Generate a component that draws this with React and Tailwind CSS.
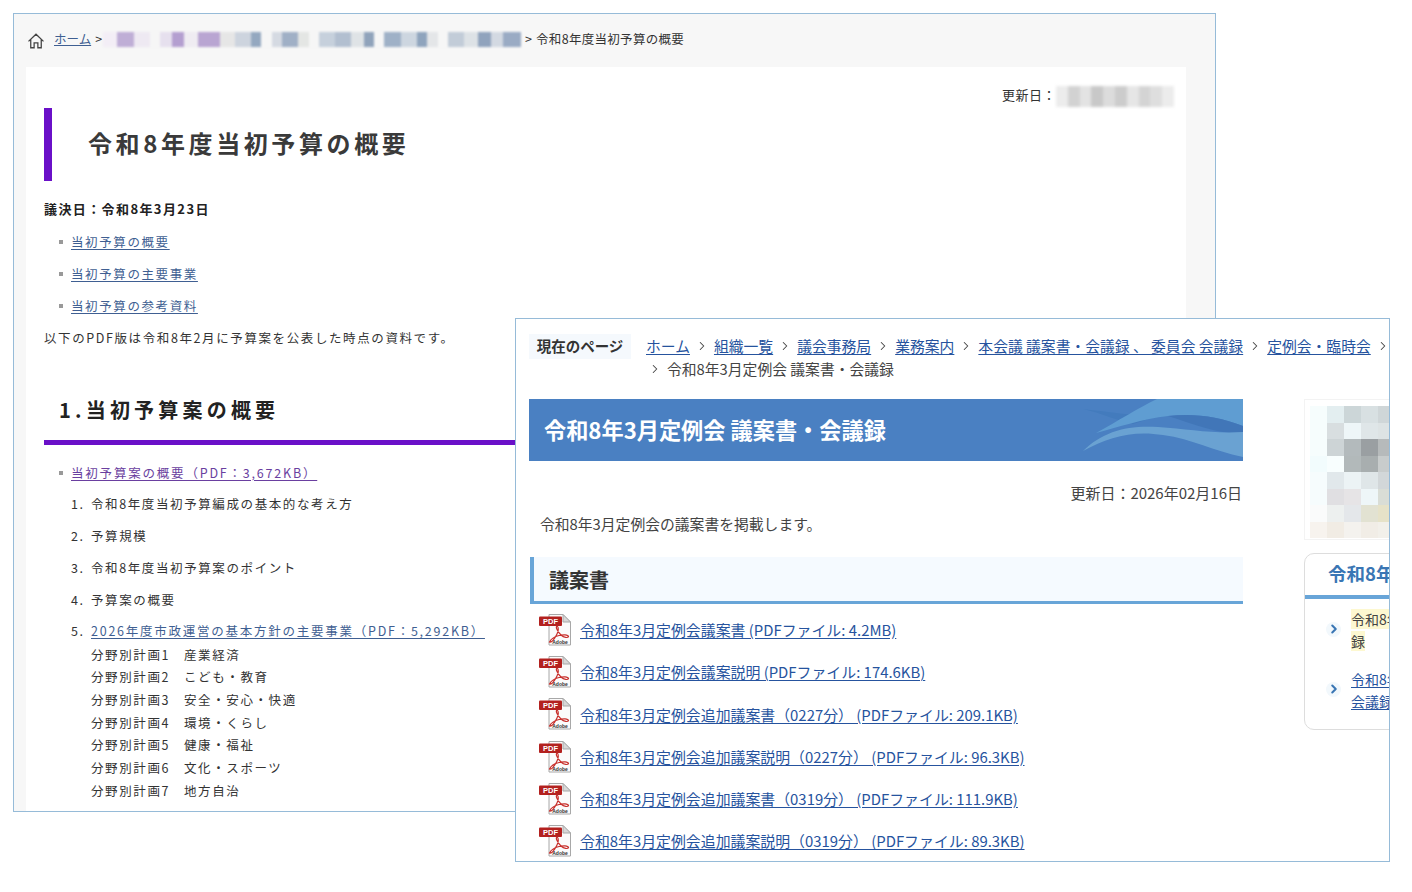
import { ChevronRight } from 'lucide-react';

const font = 'font-["Noto_Sans_CJK_JP","Noto_Sans",sans-serif]';

const crumbBlur = [
  'w-[10px] bg-[#f3eef6]', 'w-[12px] bg-[#bfaed6]', 'w-[12px] bg-[#eee9f2]', 'w-[6px] bg-[#f6f6f6]',
  'w-[7px] bg-[#e6e0ee]', 'w-[8px] bg-[#b49fd0]', 'w-[10px] bg-[#efecf2]', 'w-[18px] bg-[#b9a5d2]',
  'w-[10px] bg-[#e6e6e6]', 'w-[12px] bg-[#cdd4de]', 'w-[6px] bg-[#94a8c0]', 'w-[6px] bg-[#f6f6f6]',
  'w-[6px] bg-[#d5dae2]', 'w-[12px] bg-[#a0b0c6]', 'w-[6px] bg-[#e4e6e4]', 'w-[6px] bg-[#f6f6f6]',
  'w-[12px] bg-[#c6d0dc]', 'w-[12px] bg-[#b2bfd0]', 'w-[8px] bg-[#dfe3e6]', 'w-[6px] bg-[#90a3bb]',
  'w-[6px] bg-[#f6f6f6]', 'w-[12px] bg-[#9fb1c7]', 'w-[12px] bg-[#cdd6e0]', 'w-[6px] bg-[#8fa4bd]',
  'w-[6px] bg-[#e4e6e8]', 'w-[6px] bg-[#f6f6f6]', 'w-[12px] bg-[#c2ccd8]', 'w-[10px] bg-[#dde2e6]',
  'w-[8px] bg-[#90a3bd]', 'w-[8px] bg-[#d3d9e2]', 'w-[14px] bg-[#9aabc4]',
];

const dateBlur = [
  'bg-[#ececec]', 'bg-[#d2d2d2]', 'bg-[#e3e3e3]', 'bg-[#c8c8c8]', 'bg-[#dcdcdc]', 'bg-[#cccccc]',
  'bg-[#e6e6e6]', 'bg-[#d4d4d4]', 'bg-[#dedede]', 'bg-[#ececec]',
];

const photo = [
  'bg-[#f6fdfd]', 'bg-[#e3eef0]', 'bg-[#ccd6d8]', 'bg-[#d8e0e2]', 'bg-[#cfd6d8]',
  'bg-[#f6fdfd]', 'bg-[#d8dee0]', 'bg-[#eef6f8]', 'bg-[#dfe6e8]', 'bg-[#dde3e4]',
  'bg-[#f6fdfd]', 'bg-[#cdd4d6]', 'bg-[#b3babc]', 'bg-[#9a9fa2]', 'bg-[#b6babb]',
  'bg-[#f2fcfd]', 'bg-[#f8fefe]', 'bg-[#b2b9ba]', 'bg-[#a8aeaf]', 'bg-[#c8cccc]',
  'bg-[#f6fcfd]', 'bg-[#e1e8eb]', 'bg-[#ecf3f5]', 'bg-[#dfe6e8]', 'bg-[#d2d7d9]',
  'bg-[#f6fcfd]', 'bg-[#e0dfe2]', 'bg-[#e6e4e6]', 'bg-[#eef6f8]', 'bg-[#d9ddd6]',
  'bg-[#fafbfb]', 'bg-[#edf0ef]', 'bg-[#e4e7ea]', 'bg-[#e2e2d2]', 'bg-[#e6e2c8]',
  'bg-[#f7f3ee]', 'bg-[#f1ece4]', 'bg-[#f4f2ee]', 'bg-[#f1ede6]', 'bg-[#f2f0ea]',
];

const plans = [
  ['分野別計画1', '産業経済'],
  ['分野別計画2', 'こども・教育'],
  ['分野別計画3', '安全・安心・快適'],
  ['分野別計画4', '環境・くらし'],
  ['分野別計画5', '健康・福祉'],
  ['分野別計画6', '文化・スポーツ'],
  ['分野別計画7', '地方自治'],
];

const pdfs = [
  '令和8年3月定例会議案書 (PDFファイル: 4.2MB)',
  '令和8年3月定例会議案説明 (PDFファイル: 174.6KB)',
  '令和8年3月定例会追加議案書（0227分） (PDFファイル: 209.1KB)',
  '令和8年3月定例会追加議案説明（0227分） (PDFファイル: 96.3KB)',
  '令和8年3月定例会追加議案書（0319分） (PDFファイル: 111.9KB)',
  '令和8年3月定例会追加議案説明（0319分） (PDFファイル: 89.3KB)',
];

const crumbs = ['ホーム', '組織一覧', '議会事務局', '業務案内', '本会議 議案書・会議録 、 委員会 会議録', '定例会・臨時会'];

function PdfIcon() {
  return (
    <svg width="34" height="33" viewBox="0 0 34 33" className="shrink-0">
      <path d="M11 0.500H25L32.500 8V31H11Z" fill="#fbfbfb" stroke="#a8a8a8" strokeWidth="1" />
      <path d="M25 0.500V8H32.500Z" fill="#d8d8d8" stroke="#a8a8a8" strokeWidth="1" />
      <rect x="1" y="2.500" width="23" height="9.500" rx="1" fill="#b3211f" />
      <text x="12.500" y="10.300" textAnchor="middle" fontSize="7.500" fontWeight="700" fill="#fff" fontFamily="Liberation Sans, sans-serif">PDF</text>
      <path d="M19 12C17 13 20 18 23 21C26 24 30 24 30.500 22.500C30 20.500 25 20.500 21 21.500C17 22.500 13 25 11.500 28C14 29 17 24 19 20C20.500 17 21 13 19 12Z" fill="none" stroke="#c8302c" strokeWidth="1.200" />
      <text x="22" y="30" textAnchor="middle" fontSize="5" fontWeight="700" fill="#333" fontFamily="Liberation Sans, sans-serif">Adobe</text>
    </svg>
  );
}

function OldWindow() {
  return (
    <div className="absolute left-[13px] top-[13px] w-[1203px] h-[799px] overflow-hidden border border-[#96bbd8] bg-[#f7f7f7]">
      <div className="flex h-[51px] items-center pl-[13px] text-[12.500px] text-[#333]">
        <svg width="18" height="18" viewBox="0 0 24 24" fill="none" stroke="#444" strokeWidth="1.700" className="mt-[3px] shrink-0">
          <path d="M2 12.500L12 3L22 12.500M5 10V21H9.500V14.500H14.500V21H19V10" />
        </svg>
        <a className="ml-[9px] text-[#3f5f92] underline">ホーム</a>
        <span className="ml-[4px]">&gt;</span>
        <div className="ml-[1px] flex h-[15px] w-[418px] blur-[1px]">
          {crumbBlur.map((c, i) => <div key={i} className={`grow ${c}`} />)}
        </div>
        <span className="ml-[4px]">&gt;</span>
        <span className="ml-[4px] tracking-[0.3px]">令和8年度当初予算の概要</span>
      </div>

      <div className="ml-[12px] mt-[2px] w-[1160px] h-[760px] bg-white pl-[18px] text-[12.500px] tracking-[1.600px] text-[#333]">
        <div className="flex items-start justify-end pr-[12px] pt-[19px]">
          <span className="text-[13px] tracking-[0.500px] leading-[17px]">更新日：</span>
          <div className="flex h-[21px] w-[118px] bg-[#e8e8e8] blur-[1.500px]">
            {dateBlur.map((c, i) => <div key={i} className={`flex-1 ${c}`} />)}
          </div>
        </div>
        <div className="mt-[1px] flex h-[73px] items-center border-l-[8px] border-[#6a10c8] pb-[4px] pl-[36px] text-[24px] font-bold leading-none tracking-[3.600px] text-[#3a3a3a]">
          令和8年度当初予算の概要
        </div>
        <p className="mt-[18px] text-[13px] font-bold leading-[20px] tracking-[1.400px] text-[#222]">議決日：令和8年3月23日</p>
        {['当初予算の概要', '当初予算の主要事業', '当初予算の参考資料'].map((t, i) => (
          <div key={t} className={`${i === 0 ? 'mt-[13px]' : 'mt-[12px]'} flex h-[20px] items-center pl-[15px]`}>
            <span className="mr-[8px] h-[4px] w-[4px] bg-[#999]" />
            <a className="text-[#3f5f92] underline underline-offset-2">{t}</a>
          </div>
        ))}
        <p className="mt-[12px] leading-[20px]">以下のPDF版は令和8年2月に予算案を公表した時点の資料です。</p>
        <h2 className="mt-[48px] pl-[15px] text-[20px] font-bold leading-[28px] tracking-[4.200px] text-[#222]">1.当初予算案の概要</h2>
        <div className="mt-[16px] h-[5px] w-[1130px] bg-[#6a10c8]" />
        <div className="mt-[18px] flex h-[20px] items-center pl-[15px]">
          <span className="mr-[8px] h-[4px] w-[4px] bg-[#999]" />
          <a className="text-[#6a3fa0] tracking-[1.800px] underline underline-offset-2">当初予算案の概要（PDF：3,672KB）</a>
        </div>
        {['令和8年度当初予算編成の基本的な考え方', '予算規模', '令和8年度当初予算案のポイント', '予算案の概要'].map((t, i) => (
          <div key={t} className={`${i === 0 ? 'mt-[11px]' : 'mt-[12px]'} flex h-[20px] items-center pl-[27px]`}>
            <span className="w-[20px]">{i + 1}.</span>
            <span>{t}</span>
          </div>
        ))}
        <div className="mt-[11.500px] flex h-[20px] items-center pl-[27px]">
          <span className="w-[20px]">5.</span>
          <a className="text-[#3f5f92] tracking-[1.750px] underline underline-offset-2">2026年度市政運営の基本方針の主要事業（PDF：5,292KB）</a>
        </div>
        {plans.map(([a, b], i) => (
          <div key={a} className={`${i === 0 ? 'mt-[3.500px]' : 'mt-[2.700px]'} ml-[47px] flex h-[20px] items-center`}>
            <span className="w-[93px]">{a}</span>
            <span>{b}</span>
          </div>
        ))}
      </div>
    </div>
  );
}

function NewWindow() {
  return (
    <div className="absolute left-[515px] top-[318px] w-[875px] h-[544px] overflow-hidden border border-[#96bbd8] bg-white pl-[13px] text-[14.800px] text-[#444]">
      <div className="flex pt-[15px]">
        <div className="h-[25px] w-[102px] shrink-0 bg-[#f5f9fd] text-center text-[14.500px] font-bold leading-[24px] text-[#333]">現在のページ</div>
        <div className="ml-[15px] w-[760px] shrink-0 text-[14.800px] leading-[23px]">
          <div className="flex items-center whitespace-nowrap">
            {crumbs.map(c => (
              <span key={c} className="flex items-center">
                <a className="text-[#26539e] underline underline-offset-2">{c}</a>
                <ChevronRight size={14} strokeWidth={1.800} className="mx-[5px] text-[#444]" />
              </span>
            ))}
          </div>
          <div className="flex items-center pl-[2px]">
            <ChevronRight size={14} strokeWidth={1.800} className="mr-[5px] text-[#444]" />
            <span>令和8年3月定例会 議案書・会議録</span>
          </div>
        </div>
      </div>

      <div className="mt-[19px] flex">
        <div className="w-[714px] shrink-0">
          <div className="relative h-[62px] overflow-hidden bg-[#4a80c2]">
            <svg width="170" height="62" viewBox="0 0 170 62" className="absolute right-0 top-0">
              <path d="M10 10C28 14 45 22 60 25L85 17C65 17 35 13 10 10Z" fill="#437bbd" />
              <path d="M23 34C45 22 65 9 84 0H170V27C145 17 120 14 95 17C70 20 45 28 23 34Z" fill="#5f9dd2" />
              <path d="M95 17C120 14 145 17 170 27V35C145 35 120 25 95 17Z" fill="#4176b8" />
              <path d="M10 52C30 32 55 26 85 28C115 30 140 35 170 33V58C140 52 120 40 90 36C60 31 35 38 10 52Z" fill="#6aa2d2" />
            </svg>
            <h1 className="relative pl-[15px] text-[22.200px] font-bold leading-[61px] text-white">令和8年3月定例会 議案書・会議録</h1>
          </div>
          <p className="mt-[21px] pr-[1px] text-right leading-[21px] text-[15px]">更新日：2026年02月16日</p>
          <p className="mt-[10px] pl-[11px] leading-[22px]">令和8年3月定例会の議案書を掲載します。</p>
          <h2 className="mt-[22px] ml-[1px] h-[47px] border-b-[3px] border-l-[4px] border-[#68a5d8] bg-[#f5faff] pl-[15px] text-[20px] font-bold leading-[46px] text-[#333]">議案書</h2>
          <div className="mt-[5px] pl-[9px]">
            {pdfs.map(t => (
              <div key={t} className="flex h-[42.300px] items-center">
                <PdfIcon />
                <a className="ml-[8px] text-[14.900px] whitespace-nowrap text-[#26539e] underline underline-offset-2">{t}</a>
              </div>
            ))}
          </div>
        </div>

        <div className="ml-[61px] w-[240px] shrink-0">
          <div className="h-[141px] border border-[#f3f3f3] pl-[5px] pt-[6px]">
            <div className="grid grid-cols-[repeat(5,17px)] grid-rows-[repeat(8,16.500px)] blur-[0.500px]">
              {photo.map((c, i) => <div key={i} className={c} />)}
            </div>
          </div>
          <div className="mt-[13px] h-[177px] rounded-[10px] border border-[#dddddd] bg-white">
            <div className="h-[41px] pl-[23px] text-[18.500px] font-bold leading-[39px] whitespace-nowrap text-[#3a76b4]">令和8年3月定例会</div>
            <div className="h-[4px] bg-[#68a5d8]" />
            <div className="flex h-[60px] items-center pl-[21px]">
              <Bullet />
              <div className="ml-[10px] mt-[2px] text-[14px] leading-[22px] whitespace-nowrap text-[#444]">
                <div><span className="bg-[#fdf8d0]">令和8年3月定例会 議案書・会議</span></div>
                <div><span className="bg-[#fdf8d0]">録</span></div>
              </div>
            </div>
            <div className="flex h-[60px] items-center pl-[21px]">
              <Bullet />
              <div className="ml-[10px] mt-[2px] text-[14px] leading-[22px] whitespace-nowrap text-[#26539e] underline underline-offset-2">
                <div>令和8年2月定例会 議案書・</div>
                <div>会議録</div>
              </div>
            </div>
          </div>
        </div>
      </div>
    </div>
  );
}

function Bullet() {
  return (
    <span className="flex h-[15px] w-[15px] shrink-0 items-center justify-center rounded-full bg-[#f2f8fc]">
      <ChevronRight size={14} strokeWidth={3.500} className="text-[#3a76b4]" />
    </span>
  );
}

export default function App() {
  return (
    <div className={`relative h-[892px] w-[1412px] overflow-hidden bg-white ${font}`}>
      <OldWindow />
      <NewWindow />
    </div>
  );
}
